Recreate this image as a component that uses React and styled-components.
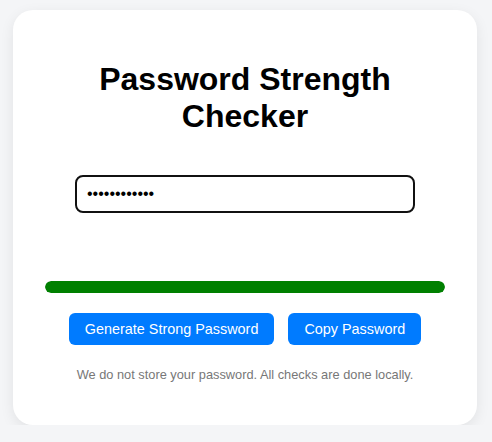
import React, {Fragment} from 'react';
import styled, {createGlobalStyle} from 'styled-components';

const GlobalStyle = createGlobalStyle`
  body {
    margin: 0;
    background: #f4f5f7;
    font-family: "Liberation Sans", Arial, sans-serif;
  }
`;

const Page = styled.div`
  display: flex;
  justify-content: center;
  align-items: flex-start;
  padding: 10px 2px 0 0;
`;

const Card = styled.main`
  width: 400px;
  padding: 30px 32px;
  background: #fff;
  border-radius: 20px;
  box-shadow: 0 4px 14px rgba(0, 0, 0, 0.08);
  text-align: center;
`;

const Title = styled.h1`
  font-size: 32px;
  font-weight: bold;
  color: #000;
  margin: 21px 0;
`;

const PasswordInput = styled.input`
  display: block;
  box-sizing: border-box;
  width: 340px;
  height: 38px;
  margin: 40px auto 0;
  padding: 8px 10px;
  border: 2px solid #111;
  border-radius: 8px;
  font-family: "Liberation Sans", Arial, sans-serif;
  font-size: 16px;
  color: #000;
  outline: none;
`;

const StrengthBar = styled.div`
  height: 12px;
  margin-top: 68px;
  border-radius: 6px;
  background: #e9ecef;
  overflow: hidden;
`;

const StrengthFill = styled.div`
  height: 100%;
  border-radius: 6px;
  background: ${p => p.$color};
`;

const Actions = styled.div`
  display: flex;
  justify-content: center;
  gap: 14px;
  margin-top: 20px;
`;

const Button = styled.button`
  height: 32px;
  padding: 0 16px;
  border: none;
  border-radius: 6px;
  background: #007bff;
  color: #fff;
  font-family: "Liberation Sans", Arial, sans-serif;
  font-size: 14.4px;
  cursor: pointer;
`;

const Note = styled.p`
  margin: 22px 0 13px;
  font-size: 12.8px;
  color: #777;
`;

const App = () => {
    const strength = 100;

    return (
        <Fragment>
            <GlobalStyle/>
            <Page>
                <Card>
                    <Title>Password Strength Checker</Title>
                    <PasswordInput type="password" defaultValue="Xk9#mPq2$vLz" autoFocus/>
                    <StrengthBar>
                        <StrengthFill $color="#008000" style={{width: `${strength}%`}}/>
                    </StrengthBar>
                    <Actions>
                        <Button>Generate Strong Password</Button>
                        <Button>Copy Password</Button>
                    </Actions>
                    <Note>We do not store your password. All checks are done locally.</Note>
                </Card>
            </Page>
        </Fragment>
    );
};

export default App;
